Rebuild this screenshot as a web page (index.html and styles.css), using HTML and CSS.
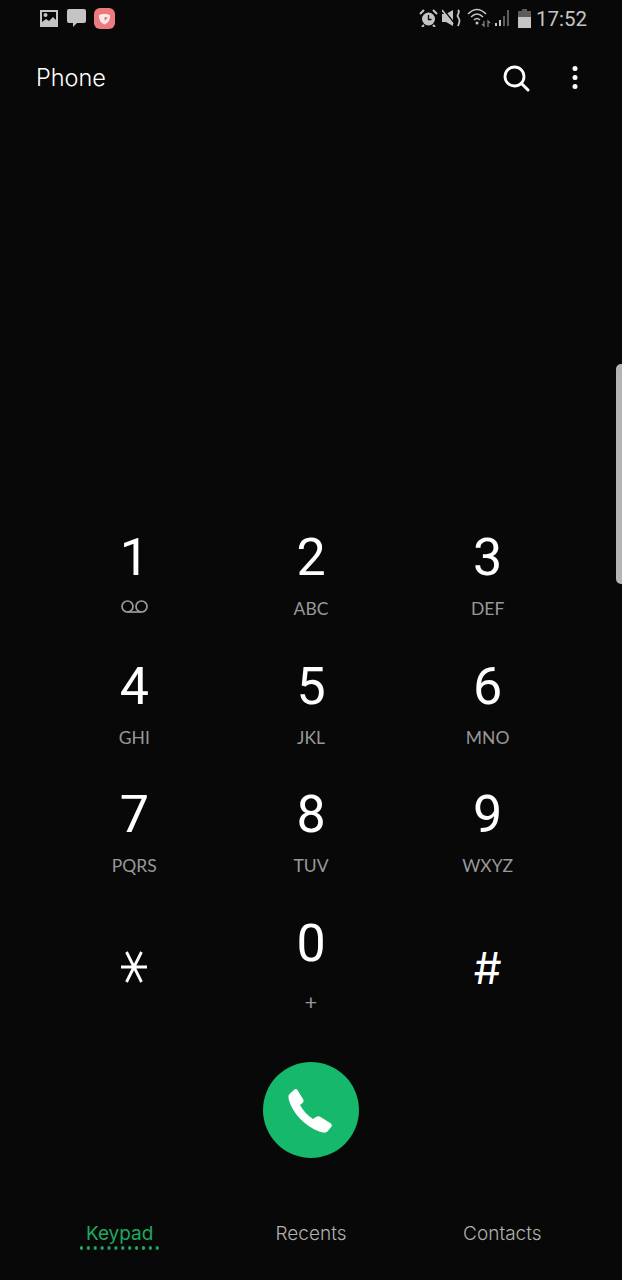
FILE: index.html
```html
<!DOCTYPE html>
<html lang="en">
<head>
  <meta charset="UTF-8">
  <meta name="viewport" content="width=device-width, initial-scale=1.0">
  <title>Phone</title>
  <link rel="stylesheet" href="styles.css">
</head>
<body>
  <div class="phone">
    <!-- status bar -->
    <div class="status-bar">
      <div class="status-left">
        <svg width="18" height="17" viewBox="0 0 18 17">
          <path fill-rule="evenodd" fill="#c4c4c4" d="M0 0h18v17H0zM2 2v10l4-3 3 2 4-4 3 3V2z"/>
          <circle cx="5.500" cy="5" r="2" fill="#c4c4c4"/>
        </svg>
        <svg width="19" height="18" viewBox="0 0 19 18">
          <path fill="#c4c4c4" d="M2 0h15a2 2 0 0 1 2 2v10a2 2 0 0 1-2 2h-7l-4 4v-4H2a2 2 0 0 1-2-2V2a2 2 0 0 1 2-2z"/>
        </svg>
        <svg class="icon-shield" width="21" height="21" viewBox="0 0 21 21">
          <rect width="21" height="21" rx="6" fill="#ec7a7e"/>
          <path fill="#fbe9e9" d="M5 7c3-1.500 8-1.500 11 0 .3 4.500-1.500 8-5.500 9.500C6.500 15 4.700 11.500 5 7z"/>
          <path fill="#ec7a7e" d="M10.500 9h3c-.2 1.800-1.200 3-3 3.500z"/>
        </svg>
      </div>
      <div class="status-right">
        <svg width="19" height="18" viewBox="0 0 19 18">
          <circle cx="9.500" cy="10" r="6.500" fill="#c4c4c4"/>
          <path d="M9.500 6v4.500h3" fill="none" stroke="#080808" stroke-width="1.300"/>
          <path d="M1 5l4-4M18 5l-4-4M5 16l-2 2M14 16l2 2" stroke="#c4c4c4" stroke-width="2"/>
        </svg>
        <svg width="19" height="18" viewBox="0 0 19 18">
          <path fill="#c4c4c4" d="M0 5h4l7-4v16l-7-4H0z"/>
          <path d="M1 0l12 15" stroke="#080808" stroke-width="1.500"/>
          <path d="M0 1l11 14" stroke="#c4c4c4" stroke-width="1.500"/>
          <path d="M16 1c3 3-2 4 0 7s2 4 0 9" fill="none" stroke="#c4c4c4" stroke-width="1.800"/>
        </svg>
        <svg class="icon-wifi" width="24" height="20" viewBox="0 0 24 20">
          <path d="M1 6c6-6 12-6 18 0M4 9c4-4 8-4 12 0M7 12c2-2 4-2 6 0" fill="none" stroke="#c4c4c4" stroke-width="1.500"/>
          <circle cx="10" cy="15" r="1.500" fill="#c4c4c4"/>
          <path d="M17 13v5l-2-2M21 19v-6l2 2" fill="none" stroke="#8a8a8a" stroke-width="1.200"/>
        </svg>
        <svg width="16" height="18" viewBox="0 0 16 18">
          <path fill="#c4c4c4" d="M0 14h2v3H0zM4 11h2v6H4z"/>
          <path fill="#5c5c5c" d="M8 7h2v10H8zM12 1h2v16h-2z"/>
        </svg>
        <svg class="icon-battery" width="13" height="19" viewBox="0 0 13 19">
          <path fill="#5c5c5c" d="M4 0h5v2h4v6H0V2h4z"/>
          <path fill="#c4c4c4" d="M0 8h13v11H0z"/>
        </svg>
        <span class="clock">17:52</span>
      </div>
    </div>

    <!-- app bar -->
    <div class="app-bar">
      <span class="app-title">Phone</span>
      <div class="app-actions">
        <svg width="28" height="28" viewBox="0 0 28 28">
          <circle cx="12.500" cy="12.500" r="9.500" fill="none" stroke="#fff" stroke-width="2.800"/>
          <path d="M19.500 19.500l6.500 6.500" stroke="#fff" stroke-width="3" stroke-linecap="round"/>
        </svg>
        <svg width="6" height="23" viewBox="0 0 6 23">
          <circle cx="3" cy="2.500" r="2.500" fill="#fff"/>
          <circle cx="3" cy="11.500" r="2.500" fill="#fff"/>
          <circle cx="3" cy="20.500" r="2.500" fill="#fff"/>
        </svg>
      </div>
    </div>

    <!-- keypad -->
    <div class="keypad">
      <div class="key">
        <span class="digit">1</span>
        <svg class="voicemail" width="29" height="14" viewBox="0 0 29 14">
          <circle cx="7.500" cy="6.500" r="5.500" fill="none" stroke="#9a9a9a" stroke-width="1.700"/>
          <circle cx="21.500" cy="6.500" r="5.500" fill="none" stroke="#9a9a9a" stroke-width="1.700"/>
          <path d="M7.500 12h14" stroke="#9a9a9a" stroke-width="1.700"/>
        </svg>
      </div>
      <div class="key"><span class="digit">2</span><span class="letters">ABC</span></div>
      <div class="key"><span class="digit">3</span><span class="letters">DEF</span></div>
      <div class="key"><span class="digit">4</span><span class="letters">GHI</span></div>
      <div class="key"><span class="digit">5</span><span class="letters">JKL</span></div>
      <div class="key"><span class="digit">6</span><span class="letters">MNO</span></div>
      <div class="key"><span class="digit">7</span><span class="letters">PQRS</span></div>
      <div class="key"><span class="digit">8</span><span class="letters">TUV</span></div>
      <div class="key"><span class="digit">9</span><span class="letters">WXYZ</span></div>
      <div class="key key-symbol">
        <svg width="26" height="32" viewBox="0 0 26 32">
          <path d="M0 16h26M5.500 1l15 30M20.500 1l-15 30" stroke="#fff" stroke-width="2.800"/>
        </svg>
      </div>
      <div class="key"><span class="digit">0</span><span class="letters plus">+</span></div>
      <div class="key key-symbol"><span class="hash">#</span></div>
    </div>

    <!-- call button -->
    <div class="call-row">
      <div class="call-button">
        <svg width="52" height="50" viewBox="0 0 52 50">
          <path fill="#fff" d="M10 4Q11.500 3.500 12.500 5L18.500 15Q19 17 17.500 18L15 20Q20 29 28 34L31 32Q33.500 30.500 35.500 32L46 38.500Q47.500 40 46.500 41.500L42.500 46.500Q41 48 38 47.500C22 44 6 27 3.500 13Q3 10.500 4.500 9Z"/>
        </svg>
      </div>
    </div>

    <!-- bottom tabs -->
    <div class="tabs">
      <div class="tab active">Keypad</div>
      <div class="tab">Recents</div>
      <div class="tab">Contacts</div>
    </div>

    <div class="edge-handle"></div>
  </div>
</body>
</html>
```

FILE: styles.css
```css
html, body {
  margin: 0;
  padding: 0;
  background: #080808;
  font-family: 'Lato', 'Inter', sans-serif;
}

.phone {
  position: relative;
  width: 622px;
  height: 1280px;
  overflow: hidden;
  display: flex;
  flex-direction: column;
  background: #080808;
}

/* status bar */
.status-bar {
  height: 36px;
  display: flex;
  justify-content: space-between;
  align-items: center;
  padding: 0 35px 0 40px;
  flex-shrink: 0;
}

.status-left {
  display: flex;
  align-items: center;
  gap: 9px;
}

.icon-shield {
  margin-left: -1px;
}

.status-right {
  display: flex;
  align-items: center;
  gap: 4px;
}

.icon-wifi {
  margin-left: 2px;
}

.icon-battery {
  margin-left: 3px;
}

.clock {
  font-family: 'Roboto', sans-serif;
  font-size: 20.500px;
  color: #c4c4c4;
  margin: 2px 0 0 1px;
}

/* app bar */
.app-bar {
  height: 84px;
  display: flex;
  justify-content: space-between;
  align-items: flex-start;
  padding: 0 44px 0 36px;
  flex-shrink: 0;
}

.app-title {
  font-family: 'Inter', sans-serif;
  font-size: 23.500px;
  font-weight: 300;
  line-height: 84px;
  color: #fff;
}

.app-actions {
  display: flex;
  align-items: center;
  gap: 42px;
  height: 83px;
}

/* keypad */
.keypad {
  margin-top: 406px;
  padding: 0 46px;
  display: grid;
  grid-template-columns: repeat(3, 1fr);
  grid-auto-rows: 128.500px;
}

.key {
  display: flex;
  flex-direction: column;
  align-items: center;
  color: #fff;
}

.digit {
  font-family: 'Roboto', sans-serif;
  font-size: 52px;
  line-height: 60px;
  font-weight: 400;
  margin-top: 2px;
}

.letters {
  font-size: 17.500px;
  line-height: 22px;
  margin-top: 10px;
  color: #989898;
}

.plus {
  font-size: 22px;
  margin-top: 17px;
}

.voicemail {
  margin-top: 12px;
}

.key-symbol {
  padding-top: 39px;
  box-sizing: border-box;
}

.hash {
  font-family: 'Inter', sans-serif;
  font-size: 44px;
  line-height: 32px;
  margin-top: 1px;
}

/* call button */
.call-row {
  display: flex;
  justify-content: center;
  margin-top: 22px;
}

.call-button {
  width: 96px;
  height: 96px;
  border-radius: 50%;
  background: #16b86c;
  display: flex;
  align-items: center;
  justify-content: center;
}

/* bottom tabs */
.tabs {
  display: grid;
  grid-template-columns: repeat(3, 1fr);
  padding: 0 24px;
  margin-top: 62px;
}

.tab {
  font-family: 'Inter', sans-serif;
  font-size: 19px;
  font-weight: 300;
  line-height: 28px;
  color: #b0b0b0;
  text-align: center;
  justify-self: center;
}

.tab.active {
  color: #1fa862;
  font-weight: 400;
  width: 83px;
  padding-bottom: 2px;
  background: radial-gradient(circle, #1fa862 1.500px, transparent 2px) left bottom / 6.900px 4px repeat-x;
}

/* side handle over the page */
.edge-handle {
  position: absolute;
  top: 364px;
  right: 0;
  width: 6px;
  height: 220px;
  background: #b4b4b4;
  border-radius: 5px 0 0 5px;
}
```
